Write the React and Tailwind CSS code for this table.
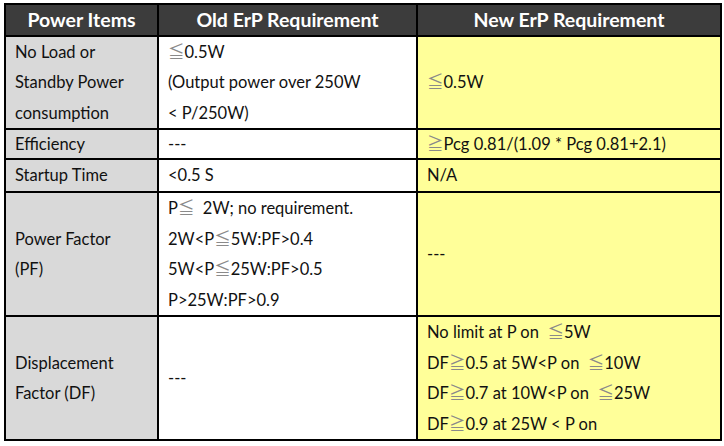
import React from 'react'

const Le = () => <span className="text-[#8a8a8a]">≦</span>
const Ge = () => <span className="text-[#8a8a8a]">≧</span>

const rows = [
  {
    h: 'h-[91px]',
    item: ['No Load or', 'Standby Power', 'consumption'],
    old: [<><Le />0.5W</>, '(Output power over 250W', '< P/250W)'],
    neu: [<><Le />0.5W</>],
  },
  {
    h: 'h-[28px]',
    item: ['Efficiency'],
    old: ['---'],
    neu: [<><Ge />Pcg 0.81/(1.09 * Pcg 0.81+2.1)</>],
  },
  {
    h: 'h-[31px]',
    item: ['Startup Time'],
    old: ['<0.5 S'],
    neu: ['N/A'],
  },
  {
    h: 'h-[122px]',
    item: ['Power Factor', '(PF)'],
    old: [
      <>P<Le />&nbsp; 2W; no requirement.</>,
      <>2W&lt;P<Le />5W:PF&gt;0.4</>,
      <>5W&lt;P<Le />25W:PF&gt;0.5</>,
      'P>25W:PF>0.9',
    ],
    neu: ['---'],
  },
  {
    h: 'h-[122px]',
    item: ['Displacement', 'Factor (DF)'],
    old: ['---'],
    neu: [
      <>No limit at P on &nbsp;<Le />5W</>,
      <>DF<Ge />0.5 at 5W&lt;P on &nbsp;<Le />10W</>,
      <>DF<Ge />0.7 at 10W&lt;P on &nbsp;<Le />25W</>,
      <>DF<Ge />0.9 at 25W &lt; P on</>,
    ],
  },
]

function Cell({ h, lines, className }) {
  return (
    <td className={`border-2 border-black p-0 ${className}`}>
      <div className={`${h} flex flex-col justify-center px-[9px]`}>
        {lines.map((l, i) => (
          <div key={i} className="leading-[30.5px] whitespace-nowrap">{l}</div>
        ))}
      </div>
    </td>
  )
}

export default function App() {
  return (
    <div className="w-[724px] h-[446px] bg-white pt-[3px] pl-[4px] font-['Lato','Noto_Sans_CJK_JP',sans-serif] text-[16.5px] text-[#111]">
      <table className="table-fixed border-collapse border-2 border-black w-[716px]">
        <colgroup>
          <col className="w-[153px]" />
          <col className="w-[259px]" />
          <col className="w-[304px]" />
        </colgroup>
        <thead>
          <tr className="bg-[#3c3c3c] text-white font-bold text-[19.5px]">
            <th className="border-2 border-black p-0"><div className="h-[30px] leading-[30px]">Power Items</div></th>
            <th className="border-2 border-black p-0"><div className="h-[30px] leading-[30px]">Old ErP Requirement</div></th>
            <th className="border-2 border-black p-0"><div className="h-[30px] leading-[30px]">New ErP Requirement</div></th>
          </tr>
        </thead>
        <tbody>
          {rows.map((r, i) => (
            <tr key={i}>
              <Cell h={r.h} lines={r.item} className="bg-[#d9d9d9]" />
              <Cell h={r.h} lines={r.old} className="bg-white" />
              <Cell h={r.h} lines={r.neu} className="bg-[#ffff99]" />
            </tr>
          ))}
        </tbody>
      </table>
    </div>
  )
}
